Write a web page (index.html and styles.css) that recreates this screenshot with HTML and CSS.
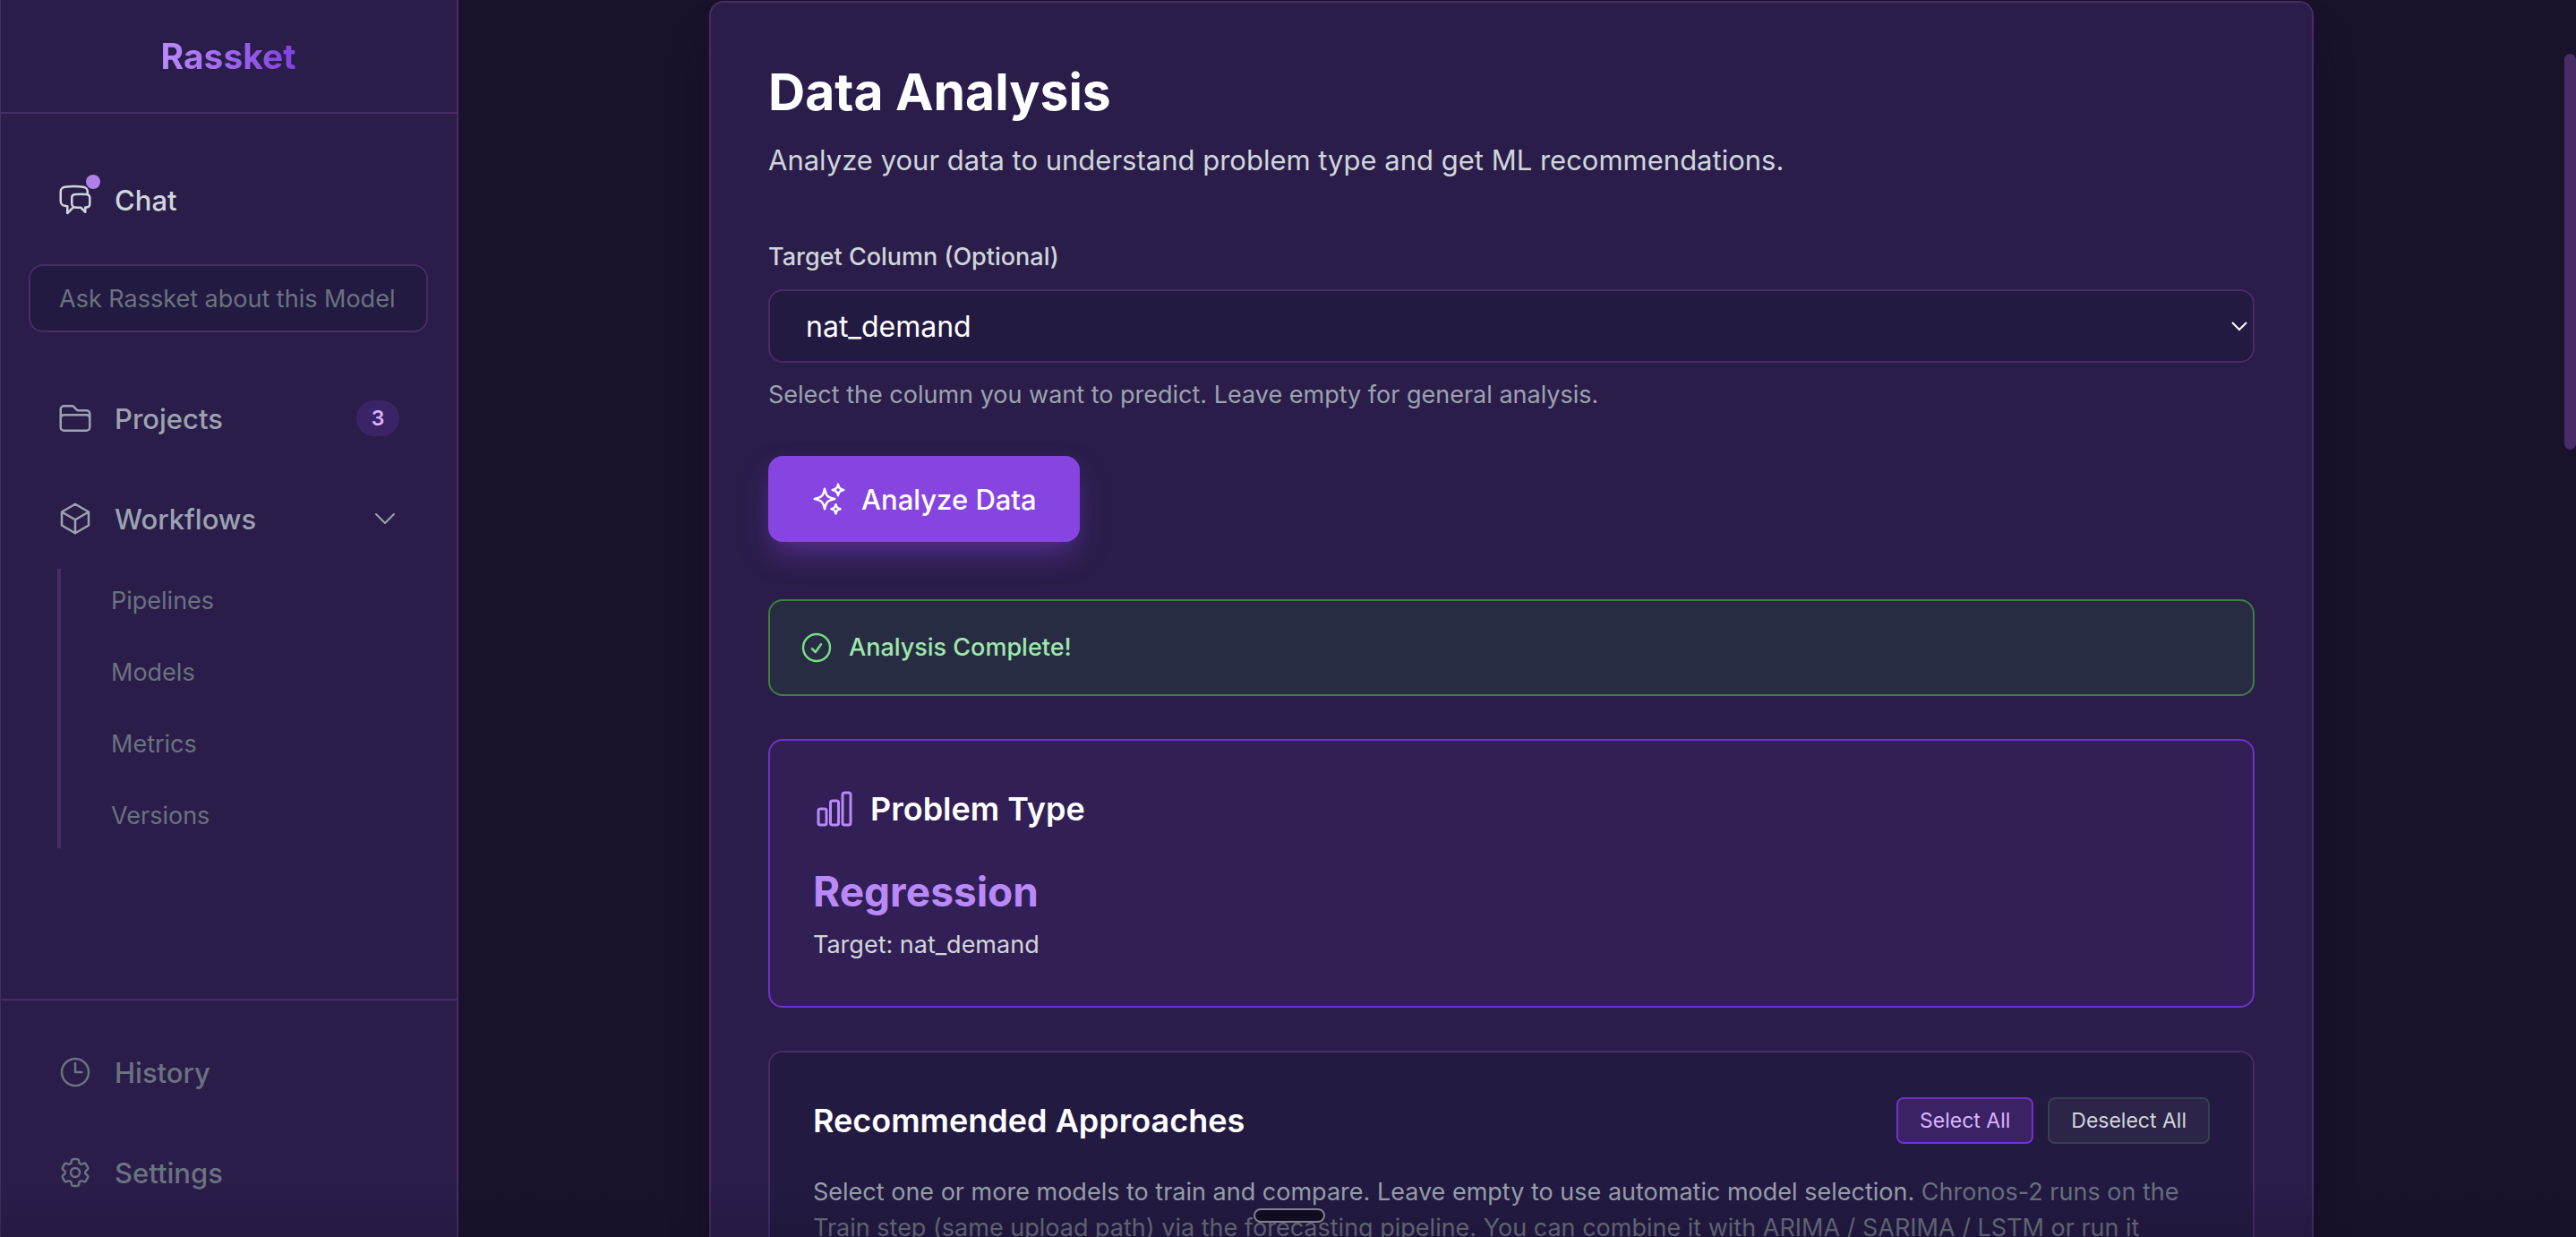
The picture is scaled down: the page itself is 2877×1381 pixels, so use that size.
FILE: index.html
```html
<!DOCTYPE html>
<html lang="en">
    <head>
        <meta charset="UTF-8" />
        <meta name="viewport" content="width=device-width, initial-scale=1.0" />
        <title>Rassket - Data Analysis</title>
        <link rel="stylesheet" href="styles.css">
    </head>

    <body>
        <div class="app">
            <aside class="sidebar">
                <header class="sidebar-header">
                    <span class="logo">Rassket</span>
                </header>

                <nav class="sidebar-nav">
                    <a href="#chat" class="nav-item active">
                        <span class="icon-wrap">
                            <svg class="icon" viewBox="0 0 24 24"><path d="M20.25 8.511c.884.284 1.5 1.128 1.5 2.097v4.286c0 1.136-.847 2.1-1.98 2.193-.34.027-.68.052-1.02.072v3.091l-3-3c-1.354 0-2.694-.055-4.02-.163a2.115 2.115 0 0 1-.825-.242m9.345-8.334a2.126 2.126 0 0 0-.476-.095 48.64 48.64 0 0 0-8.048 0c-1.131.094-1.976 1.057-1.976 2.192v4.286c0 .837.46 1.58 1.155 1.951m9.345-8.334V6.637c0-1.621-1.152-3.026-2.76-3.235A48.455 48.455 0 0 0 11.25 3c-2.115 0-4.198.137-6.24.402-1.608.209-2.76 1.614-2.76 3.235v6.226c0 1.621 1.152 3.026 2.76 3.235.577.075 1.157.14 1.74.194V21l4.155-4.155" /></svg>
                            <span class="dot"></span>
                        </span>
                        <span class="label">Chat</span>
                    </a>
                    <input class="chat-input" type="text" placeholder="Ask Rassket about this Model" aria-label="Ask Rassket about this Model" />

                    <div class="nav-group">
                        <a href="#projects" class="nav-item">
                            <svg class="icon" viewBox="0 0 24 24"><path d="M2.25 12.75V12A2.25 2.25 0 0 1 4.5 9.75h15A2.25 2.25 0 0 1 21.75 12v.75m-8.69-6.44-2.12-2.12a1.5 1.5 0 0 0-1.061-.44H4.5A2.25 2.25 0 0 0 2.25 6v12a2.25 2.25 0 0 0 2.25 2.25h15A2.25 2.25 0 0 0 21.75 18V9a2.25 2.25 0 0 0-2.25-2.25h-5.379a1.5 1.5 0 0 1-1.06-.44Z" /></svg>
                            <span class="label">Projects</span>
                            <span class="badge">3</span>
                        </a>
                        <a href="#workflows" class="nav-item">
                            <svg class="icon" viewBox="0 0 24 24"><path d="m21 7.5-9-5.25L3 7.5m18 0-9 5.25m9-5.25v9l-9 5.25M3 7.5l9 5.25M3 7.5v9l9 5.25m0-9v9" /></svg>
                            <span class="label">Workflows</span>
                            <svg class="icon chevron" viewBox="0 0 24 24"><path d="m19.5 8.25-7.5 7.5-7.5-7.5" /></svg>
                        </a>
                    </div>
                    <ul class="sub-nav">
                        <li><a href="#pipelines">Pipelines</a></li>
                        <li><a href="#models">Models</a></li>
                        <li><a href="#metrics">Metrics</a></li>
                        <li><a href="#versions">Versions</a></li>
                    </ul>
                </nav>

                <footer class="sidebar-footer">
                    <a href="#history" class="nav-item">
                        <svg class="icon" viewBox="0 0 24 24"><path d="M12 6v6h4.5m4.5 0a9 9 0 1 1-18 0 9 9 0 0 1 18 0Z" /></svg>
                        <span class="label">History</span>
                    </a>
                    <a href="#settings" class="nav-item">
                        <svg class="icon" viewBox="0 0 24 24"><path d="M9.594 3.94c.09-.542.56-.94 1.11-.94h2.593c.55 0 1.02.398 1.11.94l.213 1.281c.063.374.313.686.645.87.074.04.147.083.22.127.325.196.72.257 1.075.124l1.217-.456a1.125 1.125 0 0 1 1.37.49l1.296 2.247a1.125 1.125 0 0 1-.26 1.431l-1.003.827c-.293.241-.438.613-.43.992a7.723 7.723 0 0 1 0 .255c-.008.378.137.75.43.991l1.004.827c.424.35.534.955.26 1.43l-1.298 2.247a1.125 1.125 0 0 1-1.369.491l-1.217-.456c-.355-.133-.75-.072-1.076.124a6.47 6.47 0 0 1-.22.128c-.331.183-.581.495-.644.869l-.213 1.281c-.09.543-.56.94-1.11.94h-2.594c-.55 0-1.019-.398-1.11-.94l-.213-1.281c-.062-.374-.312-.686-.644-.87a6.52 6.52 0 0 1-.22-.127c-.325-.196-.72-.257-1.076-.124l-1.217.456a1.125 1.125 0 0 1-1.369-.49l-1.297-2.247a1.125 1.125 0 0 1 .26-1.431l1.004-.827c.292-.24.437-.613.43-.991a6.932 6.932 0 0 1 0-.255c.007-.38-.138-.751-.43-.992l-1.004-.827a1.125 1.125 0 0 1-.26-1.43l1.297-2.247a1.125 1.125 0 0 1 1.37-.491l1.216.456c.356.133.751.072 1.076-.124.072-.044.146-.086.22-.128.332-.183.582-.495.644-.869l.214-1.28Z" /><path d="M15 12a3 3 0 1 1-6 0 3 3 0 0 1 6 0Z" /></svg>
                        <span class="label">Settings</span>
                    </a>
                </footer>
            </aside>

            <main class="main">
                <section class="card">
                    <h1>Data Analysis</h1>
                    <p class="subtitle">Analyze your data to understand problem type and get ML recommendations.</p>

                    <form class="target-form">
                        <label for="target">Target Column (Optional)</label>
                        <div class="select-wrap">
                            <select id="target">
                                <option>nat_demand</option>
                            </select>
                            <svg class="select-arrow" viewBox="0 0 18 12"><path d="m1 1 8 8 8-8" /></svg>
                        </div>
                        <p class="hint">Select the column you want to predict. Leave empty for general analysis.</p>
                        <button type="button" class="btn-primary">
                            <svg class="icon" viewBox="0 0 24 24"><path d="M9.813 15.904 9 18.75l-.813-2.846a4.5 4.5 0 0 0-3.09-3.09L2.25 12l2.846-.813a4.5 4.5 0 0 0 3.09-3.09L9 5.25l.813 2.846a4.5 4.5 0 0 0 3.09 3.09L15.75 12l-2.846.813a4.5 4.5 0 0 0-3.09 3.09ZM18.259 8.715 18 9.75l-.259-1.035a3.375 3.375 0 0 0-2.455-2.456L14.25 6l1.036-.259a3.375 3.375 0 0 0 2.455-2.456L18 2.25l.259 1.035a3.375 3.375 0 0 0 2.456 2.456L21.75 6l-1.035.259a3.375 3.375 0 0 0-2.456 2.456ZM16.894 20.567 16.5 21.75l-.394-1.183a2.25 2.25 0 0 0-1.423-1.423L13.5 18.75l1.183-.394a2.25 2.25 0 0 0 1.423-1.423l.394-1.183.394 1.183a2.25 2.25 0 0 0 1.423 1.423l1.183.394-1.183.394a2.25 2.25 0 0 0-1.423 1.423Z" /></svg>
                            Analyze Data
                        </button>
                    </form>

                    <div class="alert">
                        <svg class="icon" viewBox="0 0 24 24"><path d="M9 12.75 11.25 15 15 9.75M21 12a9 9 0 1 1-18 0 9 9 0 0 1 18 0Z" /></svg>
                        <span>Analysis Complete!</span>
                    </div>

                    <div class="panel problem">
                        <div class="panel-title">
                            <svg class="icon" viewBox="0 0 24 24"><path d="M3 13.125C3 12.504 3.504 12 4.125 12h2.25c.621 0 1.125.504 1.125 1.125v6.75C7.5 20.496 6.996 21 6.375 21h-2.25A1.125 1.125 0 0 1 3 19.875v-6.75ZM9.75 8.625c0-.621.504-1.125 1.125-1.125h2.25c.621 0 1.125.504 1.125 1.125v11.25c0 .621-.504 1.125-1.125 1.125h-2.25a1.125 1.125 0 0 1-1.125-1.125V8.625ZM16.5 4.125c0-.621.504-1.125 1.125-1.125h2.25C20.496 3 21 3.504 21 4.125v15.75c0 .621-.504 1.125-1.125 1.125h-2.25a1.125 1.125 0 0 1-1.125-1.125V4.125Z" /></svg>
                            <h2>Problem Type</h2>
                        </div>
                        <p class="problem-name">Regression</p>
                        <p class="problem-target">Target: nat_demand</p>
                    </div>

                    <div class="panel">
                        <div class="panel-title spread">
                            <h2>Recommended Approaches</h2>
                            <div class="actions">
                                <button type="button" class="btn-small selected">Select All</button>
                                <button type="button" class="btn-small">Deselect All</button>
                            </div>
                        </div>
                        <p class="panel-text">Select one or more models to train and compare. Leave empty to use automatic model selection. <span>Chronos-2 runs on the Train step (same upload path) via the forecasting pipeline. You can combine it with ARIMA / SARIMA / LSTM or run it</span></p>
                    </div>
                </section>
            </main>

            <div class="scrollbar"><div class="thumb"></div></div>
            <div class="fade"></div>
            <div class="home-handle"></div>
        </div>
    </body>
</html>
```
FILE: styles.css
```css
* {
    margin: 0;
    padding: 0;
    box-sizing: border-box;
}

body {
    font-family: Inter, "Open Sans", sans-serif;
    background: #1a112b;
    color: #d1d5db;
}

a {
    color: inherit;
    text-decoration: none;
}

li {
    list-style-type: none;
}

input, select, button {
    font-family: inherit;
}

.app {
    position: relative;
    display: flex;
    height: 100vh;
    overflow: hidden;
}

.icon {
    display: block;
    flex: none;
    width: 40px;
    height: 40px;
    fill: none;
    stroke: currentColor;
    stroke-width: 1.5;
    stroke-linecap: round;
    stroke-linejoin: round;
}

/* sidebar */
.sidebar {
    display: flex;
    flex-direction: column;
    flex: none;
    width: 512px;
    background: #2a1d4a;
    border-right: 2px solid #472c66;
    box-shadow: inset 1px 0 0 #3f325c;
}

.sidebar-header {
    flex: none;
    height: 127px;
    display: flex;
    align-items: center;
    justify-content: center;
    border-bottom: 2px solid #472c66;
}

.logo {
    font-size: 39px;
    line-height: 56px;
    font-weight: 700;
    color: transparent;
    background: linear-gradient(90deg, #bb8cfa, #8040e0);
    -webkit-background-clip: text;
    background-clip: text;
}

.sidebar-nav {
    flex: 1;
    min-height: 0;
    padding: 48px 32px 0;
}

.nav-item {
    display: flex;
    align-items: center;
    gap: 24px;
    height: 96px;
    padding: 0 32px;
    font-size: 31px;
    font-weight: 500;
    color: #9ca3af;
}

.nav-item.active {
    color: #d1d5db;
}

.nav-item .label {
    flex: 1;
}

.icon-wrap {
    position: relative;
}

.dot {
    position: absolute;
    top: -8px;
    right: -8px;
    width: 16px;
    height: 16px;
    border-radius: 50%;
    background: #ae80e8;
}

.chat-input {
    display: block;
    width: 100%;
    height: 76px;
    margin: 24px 0 48px;
    padding: 0 32px;
    font-size: 27px;
    color: #fff;
    background: #221a41;
    border: 2px solid #472c66;
    border-radius: 16px;
}

.chat-input::placeholder {
    color: #6b7280;
    opacity: 1;
}

.nav-group, .sidebar-footer {
    display: flex;
    flex-direction: column;
    gap: 16px;
}

.badge {
    width: 48px;
    line-height: 40px;
    border-radius: 20px;
    background: #3b2465;
    color: #d8b4fe;
    font-size: 23px;
    font-weight: 600;
    text-align: center;
}

.icon.chevron {
    width: 32px;
    height: 32px;
}

.sub-nav {
    display: flex;
    flex-direction: column;
    gap: 8px;
    margin: 8px 0 0 32px;
    padding-left: 56px;
    border-left: 4px solid #472c66;
}

.sub-nav a {
    display: block;
    line-height: 72px;
    font-size: 27px;
    color: #6b7280;
}

.sidebar-footer {
    flex: none;
    padding: 32px 32px 24px;
    border-top: 2px solid #472c66;
}

.sidebar-footer .nav-item {
    color: #6b7280;
}

/* main */
.main {
    flex: 1;
    min-width: 0;
    overflow: hidden;
    padding-top: 1px;
}

.card {
    max-width: 1792px;
    margin: 0 auto;
    padding: 64px;
    background: #2a1d4a;
    border: 2px solid #472c66;
    border-radius: 16px;
    box-shadow: 0 40px 40px rgba(16, 14, 28, 0.4);
}

h1 {
    font-size: 57px;
    line-height: 72px;
    font-weight: 700;
    color: #fff;
}

h2 {
    font-size: 36px;
    line-height: 56px;
    font-weight: 600;
    color: #fff;
}

.subtitle {
    margin-top: 16px;
    font-size: 31px;
    line-height: 48px;
}

.target-form {
    margin-top: 64px;
}

.target-form label {
    display: block;
    font-size: 27px;
    line-height: 40px;
    font-weight: 500;
}

.select-wrap {
    position: relative;
    margin: 16px 0;
}

.select-wrap select {
    display: block;
    width: 100%;
    height: 82px;
    padding: 0 40px;
    appearance: none;
    font-size: 32px;
    color: #fff;
    background: #221a41;
    border: 2px solid #472c66;
    border-radius: 16px;
}

.select-arrow {
    position: absolute;
    top: 36px;
    right: 8px;
    width: 18px;
    height: 12px;
    fill: none;
    stroke: #fff;
    stroke-width: 2;
    pointer-events: none;
}

.hint {
    font-size: 27px;
    line-height: 40px;
    color: #9ca3af;
}

.btn-primary {
    display: flex;
    align-items: center;
    gap: 16px;
    height: 96px;
    margin-top: 48px;
    padding: 0 48px;
    font-size: 31px;
    font-weight: 500;
    color: #fff;
    background: #8644e0;
    border: none;
    border-radius: 16px;
    box-shadow: 0 16px 32px -6px rgba(134, 68, 224, 0.5);
}

.alert {
    display: flex;
    align-items: center;
    gap: 16px;
    margin-top: 64px;
    padding: 32px;
    font-size: 27px;
    line-height: 40px;
    font-weight: 500;
    color: #9ee8ae;
    background: #282c42;
    border: 2px solid #3c8040;
    border-radius: 16px;
}

.alert .icon {
    color: #78dc88;
}

.panel {
    margin-top: 48px;
    padding: 48px;
    background: #221a41;
    border: 2px solid #472c66;
    border-radius: 16px;
}

.panel.problem {
    background: #321f55;
    border-color: #7132c8;
}

.panel-title {
    display: flex;
    align-items: center;
    gap: 16px;
    margin-bottom: 32px;
}

.panel-title .icon {
    width: 48px;
    height: 48px;
    color: #b889f7;
}

.panel-title.spread {
    justify-content: space-between;
}

.problem-name {
    margin-bottom: 8px;
    font-size: 46px;
    line-height: 64px;
    font-weight: 700;
    color: #b889f7;
}

.problem-target {
    font-size: 27px;
    line-height: 40px;
}

.actions {
    display: flex;
    gap: 16px;
}

.btn-small {
    height: 52px;
    padding: 0 24px;
    font-size: 23px;
    color: #d1d5db;
    background: #2c2548;
    border: 2px solid #36404f;
    border-radius: 8px;
}

.btn-small.selected {
    color: #d8b4fe;
    background: #3a2264;
    border-color: #7132c8;
}

.panel-text {
    font-size: 27px;
    line-height: 40px;
    color: #9ca3af;
}

.panel-text span {
    color: #6b7280;
}

.scrollbar {
    flex: none;
    width: 13px;
    padding-top: 60px;
}

.thumb {
    height: 442px;
    background: #472c66;
    border-radius: 8px;
}

/* overlays at the bottom edge */
.fade {
    position: absolute;
    left: 0;
    right: 0;
    bottom: 0;
    height: 64px;
    background: linear-gradient(rgba(20, 12, 36, 0), rgba(20, 12, 36, 0.2));
    pointer-events: none;
}

.home-handle {
    position: absolute;
    left: 50%;
    bottom: 16px;
    width: 80px;
    height: 16px;
    margin-left: -39px;
    background: #120c20;
    border: 2px solid #85808f;
    border-radius: 8px;
}
```
